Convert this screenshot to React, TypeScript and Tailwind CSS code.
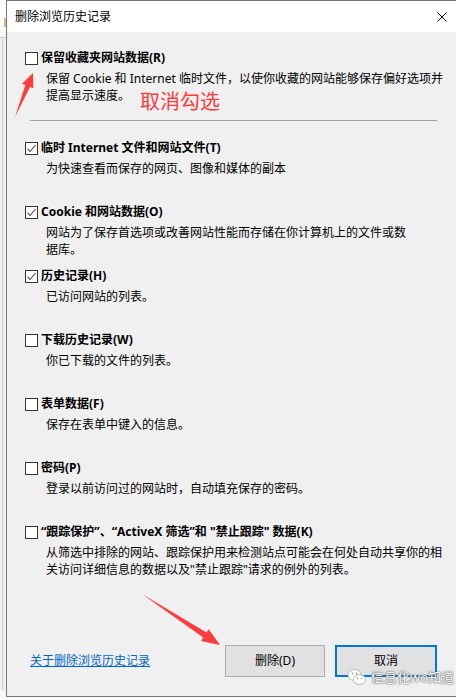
import React from "react";

type Item = {
  label: string;
  lines: string[];
  checked: boolean;
};

const items: Item[] = [
  {
    label: "临时 Internet 文件和网站文件(T)",
    lines: ["为快速查看而保存的网页、图像和媒体的副本"],
    checked: true,
  },
  {
    label: "Cookie 和网站数据(O)",
    lines: ["网站为了保存首选项或改善网站性能而存储在你计算机上的文件或数", "据库。"],
    checked: true,
  },
  { label: "历史记录(H)", lines: ["已访问网站的列表。"], checked: true },
  { label: "下载历史记录(W)", lines: ["你已下载的文件的列表。"], checked: false },
  { label: "表单数据(F)", lines: ["保存在表单中键入的信息。"], checked: false },
  { label: "密码(P)", lines: ["登录以前访问过的网站时，自动填充保存的密码。"], checked: false },
  {
    label: "“跟踪保护”、“ActiveX 筛选”和 \"禁止跟踪\" 数据(K)",
    lines: [
      "从筛选中排除的网站、跟踪保护用来检测站点可能会在何处自动共享你的相",
      "关访问详细信息的数据以及\"禁止跟踪\"请求的例外的列表。",
    ],
    checked: false,
  },
];

/**
 * Checkbox - Windows 10 style 13px box
 */
function Checkbox({ checked }: { checked: boolean }) {
  return (
    <div className="w-[13px] h-[13px] shrink-0 border border-[#333] bg-white flex items-center justify-center">
      {checked && (
        <svg width="11" height="11" viewBox="0 0 11 11">
          <polyline points="1.5,5.5 4,8.5 9.5,2" fill="none" stroke="#444" strokeWidth="1.1" />
        </svg>
      )}
    </div>
  );
}

/**
 * Option - checkbox with bold label and description lines
 */
function Option({ item, className = "" }: { item: Item; className?: string }) {
  return (
    <div className={className}>
      <div className="flex items-center h-4 pl-[18px] gap-[3px]">
        <Checkbox checked={item.checked} />
        <span className="font-bold leading-4 whitespace-nowrap">{item.label}</span>
      </div>
      <div className="mt-1 pl-[39px] leading-[17px] whitespace-nowrap">
        {item.lines.map((line) => (
          <div key={line}>{line}</div>
        ))}
      </div>
    </div>
  );
}

function WeChatIcon() {
  return (
    <svg width="20" height="18" viewBox="0 0 20 18">
      <ellipse cx="7.5" cy="7" rx="6.5" ry="5.5" fill="#fff" stroke="#aaa" strokeWidth="0.8" />
      <ellipse cx="12.5" cy="11.5" rx="6" ry="5" fill="#fff" stroke="#aaa" strokeWidth="0.8" />
      <circle cx="5.5" cy="5.5" r="0.9" fill="#999" />
      <circle cx="9.5" cy="5.5" r="0.9" fill="#999" />
      <circle cx="10.5" cy="10.5" r="0.8" fill="#999" />
      <circle cx="14.5" cy="10.5" r="0.8" fill="#999" />
    </svg>
  );
}

export default function App() {
  return (
    <div className="relative w-[456px] h-[698px] bg-[#f7f7f7] flex overflow-hidden text-[12px] text-black font-['Noto_Sans','Noto_Sans_CJK_SC',sans-serif]">
      {/* Window behind */}
      <div className="w-[6px] shrink-0 flex flex-col">
        <div className="h-[32px] bg-white pt-[18px] flex justify-end">
          <div className="w-[2px] h-[9px] bg-[#e6b27a]" />
        </div>
        <div className="h-px bg-[#d0d0d0] mt-[5px]" />
        <div className="flex-1 bg-[#f0f0f0] pl-[2px] mb-[8px]">
          <div className="w-px h-full bg-[#c8c8c8]" />
        </div>
      </div>

      {/* Dialog */}
      <div className="flex-1 h-[697px] border-l border-t border-b border-[#767676] flex flex-col">
        <div className="h-[31px] bg-white flex items-center justify-between pl-[8px] pr-[9px]">
          <span className="leading-4">删除浏览历史记录</span>
          <svg width="10" height="10" viewBox="0 0 10 10">
            <path d="M0.5 0.5 L9.5 9.5 M9.5 0.5 L0.5 9.5" stroke="#111" strokeWidth="1" />
          </svg>
        </div>

        <div className="relative flex-1 bg-[#f0f0f0] pt-[18px] flex flex-col">
          <Option
            item={{
              label: "保留收藏夹网站数据(R)",
              lines: [
                "保留 Cookie 和 Internet 临时文件，以使你收藏的网站能够保存偏好选项并",
                "提高显示速度。",
              ],
              checked: false,
            }}
          />
          <div className="mt-4 ml-[23px] mr-[19px] h-px bg-[#a0a0a0]" />

          <div className="mt-[19px] flex flex-col">
            {items.map((item) => (
              <Option key={item.label} item={item} className="h-16" />
            ))}
          </div>

          <div className="mt-[57px] h-8 flex items-center pl-[23px] pr-[19px]">
            <a className="text-[#0066cc] underline leading-4 whitespace-nowrap">关于删除浏览历史记录</a>
            <div className="flex-1" />
            <button
              type="button"
              className="w-[100px] h-8 bg-[#e1e1e1] border border-[#adadad] leading-4"
            >
              删除(D)
            </button>
            <button
              type="button"
              className="ml-[10px] w-[102px] h-8 bg-[#e1e1e1] border-2 border-[#0078d7] leading-4"
            >
              取消
            </button>
          </div>

          {/* Annotation */}
          <span className="absolute left-[133px] top-[58px] text-[20px] leading-6 text-[#ff3b3b]">取消勾选</span>
        </div>
      </div>

      {/* Red arrows */}
      <svg className="absolute left-0 top-0 pointer-events-none" width="456" height="698">
        <polygon
          points="15,117 25.4,85 22.1,83.7 33,73 33.3,88.3 30,87"
          fill="#ff3b3b"
        />
        <polygon
          points="142,594 206.5,632.6 208.7,629.2 220,645 201.1,640.9 203.3,637.6"
          fill="#ff3b3b"
        />
      </svg>

      {/* Watermark */}
      <div className="absolute left-[347px] top-[668px] flex items-center gap-[4px]">
        <WeChatIcon />
        <span className="text-[13px] leading-4 text-white [text-shadow:0_0_2px_#555,0_0_1px_#555]">信息化wo知道</span>
      </div>
    </div>
  );
}
